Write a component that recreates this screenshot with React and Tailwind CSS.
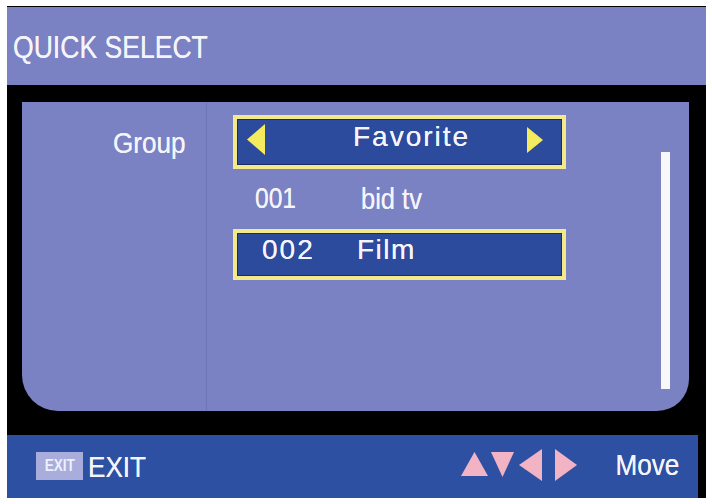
import React from 'react';

const font = "font-['Liberation_Sans',Arial,sans-serif]";

function Narrow({ size, scale, origin = 'origin-left', className = '', children }) {
  return (
    <span className={`inline-block whitespace-pre leading-none ${size} ${scale} ${origin} ${className}`}>
      {children}
    </span>
  );
}

export default function App() {
  return (
    <div className={`w-[712px] h-[504px] bg-white pt-[6px] pl-[7px] ${font} text-[#f4f4fa] [text-shadow:0_0_0.6px_#f4f4fa]`}>
      <div className="w-[699px] h-[492px] bg-black flex flex-col">
        {/* title */}
        <div className="mt-[1px] h-[78px] bg-[#7b82c3] flex items-center pl-[6px]">
          <Narrow size="text-[32px]" scale="scale-x-[0.83]" className="mt-[2px]">QUICK SELECT</Narrow>
        </div>

        {/* body */}
        <div className="h-[350px] pt-[17px] pb-[24px] pl-[15px] pr-[17px]">
          <div className="h-full bg-[#7b82c3] rounded-bl-[36px] rounded-br-[32px] flex">
            <div className="w-[185px] border-r border-[#6e75b7] flex flex-col items-end pt-[13px] pr-[20px]">
              <div className="h-[54px] flex items-center">
                <Narrow size="text-[29px]" scale="scale-x-[0.9]" origin="origin-right" className="mt-[3px]">Group</Narrow>
              </div>
            </div>

            <div className="flex-1 flex">
              <div className="w-[454px] pt-[13px] pl-[26px] flex flex-col">
                <div className="w-[333px] h-[54px] border-4 border-[#f1e98a] bg-[#2c4b9c] shadow-[inset_0_0_0_1px_#1b2c66] flex items-center pl-[10px] pr-[19px]">
                  <svg width="18" height="31" viewBox="0 0 18 31" className="mb-[5px]">
                    <polygon points="18,0 18,31 0,15.5" fill="#f4ec5e" />
                  </svg>
                  <span className="ml-[88px] mb-[10px] text-[28px] leading-none tracking-[2px]">Favorite</span>
                  <svg width="16" height="26" viewBox="0 0 16 26" className="ml-auto mb-[4px]">
                    <polygon points="0,0 0,26 16,13" fill="#f4ec5e" />
                  </svg>
                </div>

                <div className="h-[60px] flex items-center pl-[22px]">
                  <div className="w-[106px]">
                    <Narrow size="text-[30px]" scale="scale-x-[0.82]">001</Narrow>
                  </div>
                  <Narrow size="text-[30px]" scale="scale-x-[0.85]">bid tv</Narrow>
                </div>

                <div className="w-[333px] h-[51px] border-4 border-[#f1e98a] bg-[#2c4b9c] shadow-[inset_0_0_0_1px_#1b2c66] flex items-center pl-[25px]">
                  <span className="w-[95px] mb-[9px] text-[28px] leading-none tracking-[2px]">002</span>
                  <span className="mb-[9px] text-[28px] leading-none tracking-[1.5px]">Film</span>
                </div>
              </div>

              <div className="mt-[50px] w-[9px] h-[237px] bg-[#f8f8fb]" />
            </div>
          </div>
        </div>

        {/* help bar */}
        <div className="h-[63px] mr-[8px] bg-[#2e50a2] flex items-center pl-[29px] pr-[19px]">
          <div className="w-[47px] h-[28px] bg-[#a9addc] flex items-center justify-center mb-[2px]">
            <Narrow size="text-[16px]" scale="scale-x-[0.85]" origin="origin-center" className="font-bold text-[#eef0fb] [text-shadow:none]">EXIT</Narrow>
          </div>
          <Narrow size="text-[30px]" scale="scale-x-[0.87]" className="ml-[5px]">EXIT</Narrow>
          <div className="ml-auto flex items-center gap-[29px]">
            <svg width="116" height="32" viewBox="0 0 116 32" className="mb-[3px]">
              <polygon points="0,27 13.5,3 27,27" fill="#f2b3c4" />
              <polygon points="30,3 53,3 41.5,28" fill="#f2b3c4" />
              <polygon points="81,0 81,32 58,16" fill="#f2b3c4" />
              <polygon points="94,0 94,32 116,16" fill="#f2b3c4" />
            </svg>
            <Narrow size="text-[30px]" scale="scale-x-[0.87]" origin="origin-right" className="mb-[4px]">Move</Narrow>
          </div>
        </div>
      </div>
    </div>
  );
}
